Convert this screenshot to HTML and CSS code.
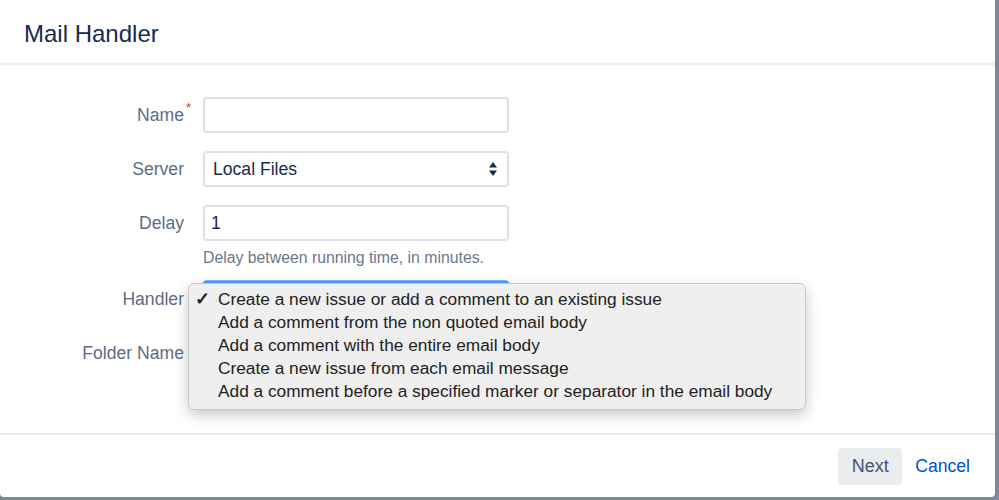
FILE: index.html
```html
<!DOCTYPE html>
<html lang="en">
<head>
  <meta charset="UTF-8">
  <title>Mail Handler</title>
  <link rel="stylesheet" href="styles.css">
</head>
<body>

<div class="dialog">
  <div class="dialog-header">
    <h2>Mail Handler</h2>
  </div>

  <div class="dialog-content">
    <form class="form">
      <div class="row">
        <label>Name<span class="req">*</span></label>
        <input type="text" class="field">
      </div>
      <div class="row">
        <label>Server</label>
        <div class="field select">
          <span>Local Files</span>
          <svg class="arrows" width="8" height="14" viewBox="0 0 8 14"><path d="M4 0L8 5.5H0Z M4 14L0 8.5H8Z" fill="#172b4d"/></svg>
        </div>
      </div>
      <div class="row">
        <label>Delay</label>
        <input type="text" class="field" value="1">
      </div>
      <div class="help">Delay between running time, in minutes.</div>
      <div class="row row-handler">
        <label>Handler</label>
        <div class="field select focused"></div>
        <ul class="menu">
          <li class="checked">Create a new issue or add a comment to an existing issue</li>
          <li>Add a comment from the non quoted email body</li>
          <li>Add a comment with the entire email body</li>
          <li>Create a new issue from each email message</li>
          <li>Add a comment before a specified marker or separator in the email body</li>
        </ul>
      </div>
      <div class="row">
        <label>Folder Name</label>
        <input type="text" class="field">
      </div>
    </form>
  </div>

  <div class="dialog-footer">
    <button class="btn">Next</button>
    <a class="cancel" href="#">Cancel</a>
  </div>
</div>

</body>
</html>
```

FILE: styles.css
```css
body {
  margin: 0;
  background-color: #7f8898;
  font-family: "Liberation Sans", Arial, sans-serif;
  color: #172b4d;
}
.dialog {
  width: 995px;
  height: 497px;
  background-color: white;
  border-radius: 0 0 4px 4px;
  display: flex;
  flex-direction: column;
}
.dialog-header {
  height: 63px;
  border-bottom: 2px solid #ebecf0;
  display: flex;
  align-items: center;
  padding-left: 24px;
}
.dialog-header h2 {
  margin: 0 0 -4px;
  font-size: 24px;
  font-weight: normal;
  color: #172b4d;
}
.dialog-content {
  height: 336px;
  padding-top: 32px;
  border-bottom: 2px solid #ebecf0;
  overflow: hidden;
}
.form {
  display: flex;
  flex-direction: column;
  gap: 18px;
}
.row {
  display: flex;
  align-items: center;
  gap: 19px;
  position: relative;
}
.row label {
  width: 184px;
  text-align: right;
  font-size: 17.6px;
  color: #5e6c84;
  position: relative;
}
.req {
  position: absolute;
  top: -5px;
  right: -7px;
  color: #de350b;
  font-size: 13px;
}
.field {
  box-sizing: border-box;
  width: 306px;
  height: 36px;
  border: 2px solid #dfe1e6;
  border-radius: 4px;
  padding: 0 6px;
  font-family: inherit;
  font-size: 17.6px;
  color: #172b4d;
  background: white;
}
.select {
  display: flex;
  align-items: center;
  justify-content: space-between;
  padding-left: 8px;
  padding-right: 10px;
}
.focused {
  border-color: #4c9aff;
  box-shadow: 0 0 0 1px #7cb4ff;
}
.row-handler {
  margin-top: -2px;
}
.help {
  margin: -10px 0 -2px 203px;
  font-size: 15.8px;
  color: #6b778c;
}
.menu {
  position: absolute;
  left: 188px;
  top: 2px;
  width: 618px;
  box-sizing: border-box;
  margin: 0;
  padding: 4px 0 6px;
  list-style: none;
  background-color: #efefef;
  border: 1px solid #c9c9c9;
  border-radius: 6px;
  box-shadow: 0 5px 14px rgba(0, 0, 0, 0.22);
  z-index: 2;
}
.menu li {
  position: relative;
  padding-left: 29px;
  height: 23px;
  line-height: 23px;
  font-size: 17.3px;
  color: #222;
}
.menu li.checked::before {
  content: "\2713";
  position: absolute;
  left: 6px;
  font-size: 18px;
  font-weight: bold;
}
.dialog-footer {
  flex: 1;
  display: flex;
  justify-content: flex-end;
  align-items: center;
  gap: 13px;
  padding: 0 25px 0 0;
}
.btn {
  width: 64px;
  height: 37px;
  border: none;
  border-radius: 4px;
  background-color: #ebecf0;
  color: #42526e;
  font-family: inherit;
  font-size: 18px;
}
.cancel {
  color: #0052cc;
  font-size: 17.6px;
  text-decoration: none;
}
```
